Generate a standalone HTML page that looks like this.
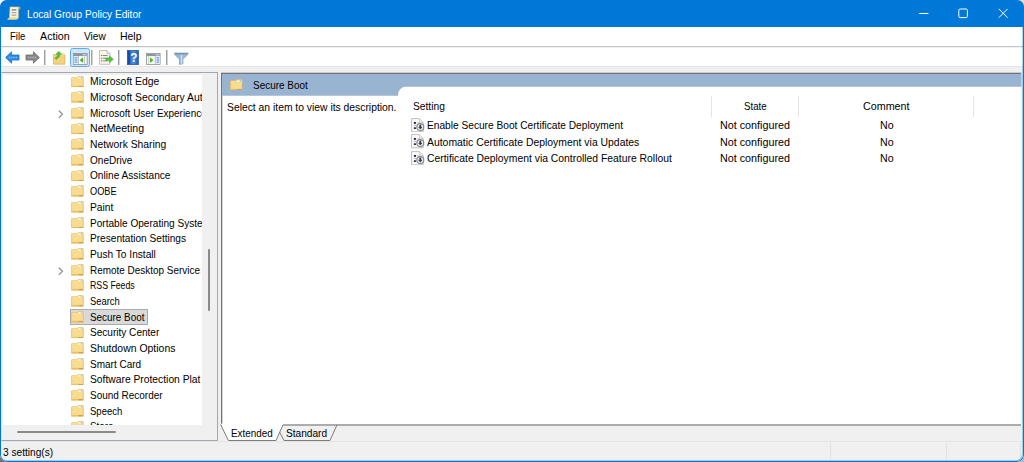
<!DOCTYPE html>
<html lang="en"><head><meta charset="utf-8"><title>Local Group Policy Editor</title>
<style>
html,body{margin:0;padding:0}
body{width:1024px;height:462px;overflow:hidden;position:relative;background:#f0f0f0;
 font-family:"Liberation Sans",sans-serif;font-size:11px;color:#000;line-height:16px}
.abs,.win *{position:absolute;box-sizing:border-box}
.cor{position:absolute;width:10px;height:10px}
.win{position:absolute;left:0;top:0;width:1024px;height:462px;background:#f0f0f0;border-radius:7px;overflow:hidden}
.bd{border:solid #0078d7;border-width:0 1px 1px 1px;left:0;top:0;width:1024px;height:462px;border-radius:7px;pointer-events:none;box-shadow:inset -1px -1px 0 0 rgba(0,120,215,.33)}
.t{white-space:nowrap;transform-origin:0 50%;height:16px;line-height:16px}
.title{left:0;top:0;width:1024px;height:27px;background:#0078d7}
.menu{left:1px;top:27px;width:1022px;height:19px;background:#fff}
.mline{left:1px;top:46px;width:1022px;height:1px;background:#c3c3c3}
.tool{left:1px;top:47px;width:1022px;height:19px;background:linear-gradient(#f0f2f8,#f0f2f8 1px,#fff 1px);box-shadow:0 1px 0 #e5e5e5}
.sep{top:3px;width:1px;height:15px;background:#a0a0a0;box-shadow:1px 0 0 #d2d2d2}
.treep{left:1px;top:72px;width:217px;height:369px;background:#f0f0f0;border:1px solid #a2a6ad;border-left-color:#e3e3e3}
.treec{left:1px;top:2px;width:199px;height:350px;background:#fff;overflow:hidden}
.tr{left:0;height:16px;width:400px}
.tr .fo{left:68.2px;top:2.2px;width:12.8px;height:11.8px}
.tr .ch{left:55.3px;top:5.5px;width:6px;height:8.4px}
.tr .tx{top:0;height:16px;line-height:16px;white-space:nowrap;transform-origin:0 50%}
.selbox{left:67px;top:234px;width:78px;height:16px;background:#d9d9d9;border:1px solid #a9abb0}
.rp{left:221px;top:73px;width:800px;height:353px;background:#fff;border-top:1px solid #747474;border-left:1px solid #747474;border-bottom:2px solid #acacac}
.rph{left:222px;top:74px;width:799px;height:22px;background:#99b4d1}
.vs{top:96px;width:1px;height:21px;background:#e3e3e3}
</style></head>
<body>
<div class="cor" style="left:0;top:0;background:#f3f3f3"></div>
<div class="cor" style="right:0;top:0;background:#ecdcae"></div>
<div class="cor" style="left:0;bottom:0;background:#6e6e6e"></div>
<div class="cor" style="right:0;bottom:0;background:#b9b9b9"></div>
<svg width="0" height="0" style="position:absolute"><defs>
<g id="fold">
 <path d="M0.4 2.3 Q0.4 1.7 1 1.7 L6.2 1.7 L7.3 0.5 L12 0.5 Q12.6 .5 12.6 1.1 L12.6 11.5 L0.4 11.5 Z" fill="#f6d887" stroke="#e6bd62" stroke-width=".7"/>
 <path d="M1 2.5 L6.5 2.5 L7.6 1.3 L12 1.3 L12 3.4 L1 3.4Z" fill="#fbe6a6"/>
 <rect x="1.6" y="4" width="9.8" height="5.6" fill="#f9de95" opacity=".7"/>
 <rect x="8" y="1.3" width="3.6" height="1.1" fill="#fdfdf8"/>
 <rect x="10" y="1.3" width="1.6" height="1.1" fill="#88aee6"/>
 <rect x="0.8" y="10.5" width="11.4" height=".8" fill="#e7b654"/>
 <rect x="8" y="10.6" width="4" height=".7" fill="#b98546"/>
</g>
<g id="pol">
 <path d="M0.6 0.6 H8.4 L12.2 4.4 V13.8 H0.6 Z" fill="#fcfcfc" stroke="#bdbdbd" stroke-width="1"/>
 <path d="M8.4 .6 V4.4 H12.2" fill="#ededed" stroke="#c4c4c4" stroke-width=".8"/>
 <rect x="2.9" y="4" width="2" height="1.9" fill="#262626"/>
 <rect x="2.9" y="9.3" width="2" height="1.7" fill="#262626"/>
 <rect x="2.9" y="7" width="2.6" height=".9" fill="#8fb0de"/>
 <rect x="5.6" y="4.5" width="2.4" height=".9" fill="#aab6c8"/>
 <circle cx="9.3" cy="9.1" r="3.45" fill="#fff" stroke="#8c8c8c" stroke-width="1.25"/>
 <path d="M9.3 6.5 V10" stroke="#3a3f4a" stroke-width="1.9"/>
 <path d="M6.9 8.7 H11.7 L9.3 11.6 Z" fill="#3a3f4a"/>
</g>
</defs></svg>
<div class="win">
 <div class="title">
  <svg style="left:7.4px;top:6.2px;width:14.4px;height:14.4px" viewBox="0 0 14 14">
   <path d="M3 1 L12.5 1 L12.5 3 L11 3 L11 11 Q11 13 9 13 L0.5 13 Q2.5 12.5 2.5 10.5 Z" fill="#fdf3cf" stroke="#e6cf8b" stroke-width=".6"/>
   <path d="M0.5 13 L9 13 Q10.8 12.6 11 11 L3 11 Q2.6 12.6 .5 13Z" fill="#f1d88f"/>
   <path d="M11.2 1 L13.2 1.2 L12.6 3.2 L11.2 3Z" fill="#c98a55"/>
   <rect x="4.5" y="3" width="4.6" height="1.6" fill="#8e96b3"/>
   <rect x="4.5" y="6" width="4.6" height="1" fill="#8e96b3"/>
   <rect x="4.5" y="8.4" width="4.6" height="1" fill="#8e96b3"/>
  </svg>
  <svg style="left:910px;top:0;width:114px;height:27px" viewBox="0 0 114 27">
   <path d="M9.2 13.5 H18.4" stroke="#fff" stroke-width="1" fill="none"/>
   <rect x="48.8" y="9" width="8.6" height="8.6" rx="1.3" fill="none" stroke="#fff" stroke-width="1"/>
   <path d="M88.8 8.9 L97.6 17.7 M97.6 8.9 L88.8 17.7" stroke="#fff" stroke-width="1" fill="none"/>
  </svg>
 </div>
 <div class="menu">
 </div>
 <div class="mline"></div>
 <div class="tool">
  <!-- back -->
  <svg style="left:4px;top:4.4px;width:15px;height:13px" viewBox="0 0 15 13">
   <path d="M0.6 6.5 L6.6 0.8 L6.6 4 L14 4 L14 9 L6.6 9 L6.6 12.2 Z" fill="#2b8be0" stroke="#1b6fc4" stroke-width=".8"/>
   <path d="M4 6.5 H12" stroke="#8cc6f5" stroke-width="1.4" stroke-dasharray="1.2 1"/>
  </svg>
  <!-- forward -->
  <svg style="left:24px;top:4.4px;width:15px;height:13px" viewBox="0 0 15 13">
   <path d="M14.4 6.5 L8.4 0.8 L8.4 4 L1 4 L1 9 L8.4 9 L8.4 12.2 Z" fill="#8b8b8b" stroke="#6a6a6a" stroke-width=".8"/>
   <path d="M3 6.5 H11" stroke="#b5b5b5" stroke-width="1.4" stroke-dasharray="1.2 1"/>
  </svg>
  <div class="sep" style="left:43px"></div>
  <!-- up folder -->
  <svg style="left:52px;top:4px;width:13.4px;height:14px" viewBox="0 0 14 14" preserveAspectRatio="none">
   <path d="M0.5 3.5 L11.5 3.5 L12.5 4.5 L12.5 13.2 L0.5 13.2 Z" fill="#f2d27c" stroke="#d9ae55" stroke-width=".7"/>
   <path d="M8 2 L12 2 L12 4 L8 4Z" fill="#f7e3a4"/>
   <path d="M6 0.3 L9 3.2 L7.2 3.4 L6.6 6 L3.2 8.4 L2 7 L4.6 5 L4.6 3.4 L3 3.2 Z" fill="#4fc437" stroke="#35a524" stroke-width=".4"/>
  </svg>
  <!-- show/hide tree (active) -->
  <div style="left:69px;top:1px;width:20px;height:18.5px;background:#cce8ff;border:1px solid #62acec;border-radius:2.5px"></div>
  <svg style="left:72px;top:6px;width:14.5px;height:12px" viewBox="0 0 15 12">
   <rect x=".4" y=".4" width="14.2" height="11.2" fill="#fff" stroke="#8a8a8a" stroke-width=".8"/>
   <rect x=".8" y=".8" width="13.4" height="2.2" fill="#8d959d"/>
   <rect x="10" y="1.2" width="3.4" height="1" fill="#d6e6f7"/>
   <rect x=".8" y="3" width="4.4" height="8.2" fill="#e7eef7"/>
   <path d="M1.6 4.8 H4.4 M1.6 7 H4.4 M1.6 9.2 H4.4" stroke="#4b84d6" stroke-width="1"/>
   <path d="M5.6 3 V11.4" stroke="#8a8a8a" stroke-width=".6"/>
   <path d="M10.4 4.2 L10.4 10.2 L6.8 7.2 Z" fill="#43b72c"/>
   <path d="M12 3.4 V11.2" stroke="#9a9a9a" stroke-width=".6"/>
  </svg>
  <div class="sep" style="left:89.5px"></div>
  <!-- export list -->
  <svg style="left:98px;top:3px;width:15px;height:15px" viewBox="0 0 15 15">
   <path d="M0.5 0.5 L8 0.5 L11 3.5 L11 14.3 L0.5 14.3 Z" fill="#fbf5e6" stroke="#a9a9a9" stroke-width=".7"/>
   <path d="M8 .5 L8 3.5 L11 3.5" fill="#e8e8e8" stroke="#a9a9a9" stroke-width=".6"/>
   <path d="M3.6 5.5 H8.6 M3.6 8.2 H8.6 M3.6 10.9 H8.6" stroke="#7b8aa0" stroke-width="1"/>
   <path d="M2 5.5 h.9 M2 8.2 h.9 M2 10.9 h.9" stroke="#555" stroke-width="1"/>
   <path d="M6.8 8 L10.4 8 L10.4 5.8 L14.4 9.3 L10.4 12.8 L10.4 10.6 L6.8 10.6 Z" fill="#4fc437" stroke="#35a524" stroke-width=".4"/>
  </svg>
  <div class="sep" style="left:116.5px"></div>
  <!-- help -->
  <svg style="left:126px;top:3px;width:11.8px;height:15px" viewBox="0 0 12.5 15" preserveAspectRatio="none">
   <linearGradient id="hg" x1="0" x2="1" y1="0" y2="0"><stop offset="0" stop-color="#1f55b3"/><stop offset=".55" stop-color="#4b8fe2"/><stop offset="1" stop-color="#1f5bb8"/></linearGradient><rect x=".4" y=".4" width="11.7" height="14.2" fill="url(#hg)" stroke="#2a5aa8" stroke-width=".8"/>
   <rect x=".8" y=".8" width="2.4" height="13.4" fill="#1c4c9f"/>
   <text x="7.4" y="12" font-family="Liberation Sans, sans-serif" font-weight="bold" font-size="12.5" fill="#fff" text-anchor="middle">?</text>
  </svg>
  <!-- action pane -->
  <svg style="left:145px;top:6px;width:14.5px;height:12px" viewBox="0 0 15 12">
   <rect x=".4" y=".4" width="14.2" height="11.2" fill="#fff" stroke="#8a8a8a" stroke-width=".8"/>
   <rect x=".8" y=".8" width="13.4" height="2.2" fill="#8d959d"/>
   <rect x="10" y="1.2" width="3.4" height="1" fill="#d6e6f7"/>
   <rect x="10" y="3" width="4.2" height="8.2" fill="#e7eef7"/>
   <path d="M11 4.8 H13.6 M11 7 H13.6 M11 9.2 H13.6" stroke="#4b84d6" stroke-width="1"/>
   <path d="M9.6 3 V11.4" stroke="#8a8a8a" stroke-width=".6"/>
   <path d="M4.2 4.2 L4.2 10.2 L7.8 7.2 Z" fill="#43b72c"/>
   <path d="M2.8 3.4 V11.2" stroke="#9a9a9a" stroke-width=".6"/>
  </svg>
  <div class="sep" style="left:164.6px"></div>
  <!-- filter -->
  <svg style="left:173px;top:5px;width:14.5px;height:13px" viewBox="0 0 15 13">
   <path d="M0.5 0.8 L14.5 0.8 L14.5 2.2 L9.3 7.4 L9.3 12 L5.7 12.6 L5.7 7.4 L0.5 2.2 Z" fill="#9db9d3" stroke="#6f8fae" stroke-width=".6"/>
   <path d="M1.2 1.2 H13.8 V2 H1.2Z" fill="#5f7f9f"/>
   <path d="M7.8 3 L7.8 12" stroke="#d4e3f1" stroke-width="1.4"/>
  </svg>
 </div>

 <!-- tree pane -->
 <div class="treep">
  <div class="treec">
<div class="selbox"></div>
<div class="tr" style="top:-1.70px"><svg class="fo" viewBox="0 0 13 12"><use href="#fold"/></svg><span class="tx" style="left:87.15px;transform:scaleX(0.9454)">Microsoft Edge</span></div>
<div class="tr" style="top:13.99px"><svg class="fo" viewBox="0 0 13 12"><use href="#fold"/></svg><span class="tx" style="left:87.15px;transform:scaleX(0.9447)">Microsoft Secondary Authentication Factor</span></div>
<div class="tr" style="top:29.68px"><svg class="ch" viewBox="0 0 6 8.4"><path d="M0.9 0.7 L4.5 4.2 L0.9 7.7" fill="none" stroke="#8d9096" stroke-width="1.25"/></svg><svg class="fo" viewBox="0 0 13 12"><use href="#fold"/></svg><span class="tx" style="left:87.15px;transform:scaleX(0.9046)">Microsoft User Experience Virtualization</span></div>
<div class="tr" style="top:45.37px"><svg class="fo" viewBox="0 0 13 12"><use href="#fold"/></svg><span class="tx" style="left:87.15px;transform:scaleX(0.9620)">NetMeeting</span></div>
<div class="tr" style="top:61.06px"><svg class="fo" viewBox="0 0 13 12"><use href="#fold"/></svg><span class="tx" style="left:87.15px;transform:scaleX(0.9372)">Network Sharing</span></div>
<div class="tr" style="top:76.75px"><svg class="fo" viewBox="0 0 13 12"><use href="#fold"/></svg><span class="tx" style="left:87.15px;transform:scaleX(0.9128)">OneDrive</span></div>
<div class="tr" style="top:92.44px"><svg class="fo" viewBox="0 0 13 12"><use href="#fold"/></svg><span class="tx" style="left:87.15px;transform:scaleX(0.9201)">Online Assistance</span></div>
<div class="tr" style="top:108.13px"><svg class="fo" viewBox="0 0 13 12"><use href="#fold"/></svg><span class="tx" style="left:87.15px;transform:scaleX(0.8363)">OOBE</span></div>
<div class="tr" style="top:123.82px"><svg class="fo" viewBox="0 0 13 12"><use href="#fold"/></svg><span class="tx" style="left:87.15px;transform:scaleX(0.9314)">Paint</span></div>
<div class="tr" style="top:139.51px"><svg class="fo" viewBox="0 0 13 12"><use href="#fold"/></svg><span class="tx" style="left:87.15px;transform:scaleX(0.9171)">Portable Operating System</span></div>
<div class="tr" style="top:155.20px"><svg class="fo" viewBox="0 0 13 12"><use href="#fold"/></svg><span class="tx" style="left:87.15px;transform:scaleX(0.9185)">Presentation Settings</span></div>
<div class="tr" style="top:170.89px"><svg class="fo" viewBox="0 0 13 12"><use href="#fold"/></svg><span class="tx" style="left:87.15px;transform:scaleX(0.9227)">Push To Install</span></div>
<div class="tr" style="top:186.58px"><svg class="ch" viewBox="0 0 6 8.4"><path d="M0.9 0.7 L4.5 4.2 L0.9 7.7" fill="none" stroke="#8d9096" stroke-width="1.25"/></svg><svg class="fo" viewBox="0 0 13 12"><use href="#fold"/></svg><span class="tx" style="left:87.15px;transform:scaleX(0.9034);overflow:hidden;width:122.3px">Remote Desktop Services</span></div>
<div class="tr" style="top:202.27px"><svg class="fo" viewBox="0 0 13 12"><use href="#fold"/></svg><span class="tx" style="left:87.15px;transform:scaleX(0.7948)">RSS Feeds</span></div>
<div class="tr" style="top:217.96px"><svg class="fo" viewBox="0 0 13 12"><use href="#fold"/></svg><span class="tx" style="left:87.15px;transform:scaleX(0.8550)">Search</span></div>
<div class="tr sel" style="top:233.65px"><svg class="fo" viewBox="0 0 13 12"><use href="#fold"/></svg><span class="tx" style="left:87.15px;transform:scaleX(0.8994)">Secure Boot</span></div>
<div class="tr" style="top:249.34px"><svg class="fo" viewBox="0 0 13 12"><use href="#fold"/></svg><span class="tx" style="left:87.15px;transform:scaleX(0.9141)">Security Center</span></div>
<div class="tr" style="top:265.03px"><svg class="fo" viewBox="0 0 13 12"><use href="#fold"/></svg><span class="tx" style="left:87.15px;transform:scaleX(0.9503)">Shutdown Options</span></div>
<div class="tr" style="top:280.72px"><svg class="fo" viewBox="0 0 13 12"><use href="#fold"/></svg><span class="tx" style="left:87.15px;transform:scaleX(0.9088)">Smart Card</span></div>
<div class="tr" style="top:296.41px"><svg class="fo" viewBox="0 0 13 12"><use href="#fold"/></svg><span class="tx" style="left:87.15px;transform:scaleX(0.9360);overflow:hidden;width:118.4px">Software Protection Platform</span></div>
<div class="tr" style="top:312.10px"><svg class="fo" viewBox="0 0 13 12"><use href="#fold"/></svg><span class="tx" style="left:87.15px;transform:scaleX(0.9062)">Sound Recorder</span></div>
<div class="tr" style="top:327.79px"><svg class="fo" viewBox="0 0 13 12"><use href="#fold"/></svg><span class="tx" style="left:87.15px;transform:scaleX(0.8685)">Speech</span></div>
<div class="tr" style="top:343.48px"><svg class="fo" viewBox="0 0 13 12"><use href="#fold"/></svg><span class="tx" style="left:87.15px;transform:scaleX(0.8978)">Store</span></div>
  </div>
  <!-- v scroll thumb -->
  <div style="left:206px;top:176px;width:2px;height:62px;background:#8b8989;border-radius:1px"></div>
  <!-- h scroll thumb -->
  <div style="left:15.4px;top:358px;width:98.9px;height:2px;background:#8b8989;border-radius:1px"></div>
 </div>

 <!-- right pane -->
 <div style="left:221px;top:72px;width:801px;height:1px;background:rgba(109,109,109,.28)"></div>
 <div class="rp"></div>
 <div style="left:222px;top:96px;width:1px;height:328px;background:rgba(116,116,116,.3)"></div>
 <svg class="abs" style="left:222px;top:74px;width:800px;height:23px" viewBox="0 0 800 23"><path d="M0 0 H799.5 V12.75 H182.8 C179.6 13.2 176.9 16.3 176.1 19.6 V21.75 H0 Z" fill="#99b4d1"/></svg>
 <svg class="abs" style="left:230.3px;top:78.7px;width:12.4px;height:11.6px" viewBox="0 0 13 12"><use href="#fold"/></svg>

 <div class="vs" style="left:711px"></div>
 <div class="vs" style="left:798px"></div>
 <div class="vs" style="left:973px"></div>

 <svg class="abs" style="left:410.8px;top:117.7px;width:14.4px;height:14.4px" viewBox="0 0 14.4 14.4"><use href="#pol"/></svg>
 <svg class="abs" style="left:410.8px;top:134.3px;width:14.4px;height:14.4px" viewBox="0 0 14.4 14.4"><use href="#pol"/></svg>
 <svg class="abs" style="left:410.8px;top:150.8px;width:14.4px;height:14.4px" viewBox="0 0 14.4 14.4"><use href="#pol"/></svg>
 <!-- tabs -->
 <svg class="abs" style="left:218px;top:422px;width:130px;height:20px" viewBox="0 0 130 20">
  <path d="M2.6 1.8 L65.4 1.8 L58 18.5 L10.4 18.5 Z" fill="#fff"/>
  <path d="M2.6 2.5 L10.4 18.5 L58 18.5 L65 2.8" fill="none" stroke="#7d7d7d" stroke-width="1"/>
  <path d="M61.5 10 L66 18.5 L112 18.5 L119 2.8" fill="none" stroke="#7d7d7d" stroke-width="1"/>
 </svg>

 <!-- status bar -->
 <div style="left:1px;top:441px;width:1021px;height:1px;background:#e4e4e4"></div>
 <div style="left:830px;top:443px;width:1px;height:17px;background:#e2e2e2"></div>
 <div style="left:946px;top:443px;width:1px;height:17px;background:#e2e2e2"></div>
 <div style="left:1020px;top:443px;width:1px;height:17px;background:#e2e2e2"></div>
<div class="t" style="left:26.50px;top:5.55px;transform:scaleX(0.9220);color:#fff">Local Group Policy Editor</div>
<div class="t" style="left:9.80px;top:28.00px;transform:scaleX(0.8633)">File</div>
<div class="t" style="left:39.75px;top:28.00px;transform:scaleX(0.9719)">Action</div>
<div class="t" style="left:83.75px;top:28.00px;transform:scaleX(0.9241)">View</div>
<div class="t" style="left:119.60px;top:28.00px;transform:scaleX(0.9509)">Help</div>
<div class="t" style="left:252.75px;top:76.70px;transform:scaleX(0.9052)">Secure Boot</div>
<div class="t" style="left:226.90px;top:98.60px;transform:scaleX(0.9395)">Select an item to view its description.</div>
<div class="t" style="left:412.50px;top:97.80px;transform:scaleX(0.9288)">Setting</div>
<div class="t" style="left:744.40px;top:97.80px;transform:scaleX(0.8800)">State</div>
<div class="t" style="left:863.25px;top:97.80px;transform:scaleX(0.9764)">Comment</div>
<div class="t" style="left:426.80px;top:116.80px;transform:scaleX(0.9236)">Enable Secure Boot Certificate Deployment</div>
<div class="t" style="left:426.50px;top:133.55px;transform:scaleX(0.9463)">Automatic Certificate Deployment via Updates</div>
<div class="t" style="left:426.80px;top:149.90px;transform:scaleX(0.9423)">Certificate Deployment via Controlled Feature Rollout</div>
<div class="t" style="left:720.20px;top:116.80px;transform:scaleX(0.9772)">Not configured</div>
<div class="t" style="left:720.20px;top:133.55px;transform:scaleX(0.9772)">Not configured</div>
<div class="t" style="left:720.20px;top:149.90px;transform:scaleX(0.9772)">Not configured</div>
<div class="t" style="left:879.75px;top:116.80px;transform:scaleX(0.9682)">No</div>
<div class="t" style="left:879.75px;top:133.55px;transform:scaleX(0.9682)">No</div>
<div class="t" style="left:879.75px;top:149.90px;transform:scaleX(0.9682)">No</div>
<div class="t" style="left:231.00px;top:424.60px;transform:scaleX(0.8951)">Extended</div>
<div class="t" style="left:286.30px;top:424.60px;transform:scaleX(0.9208)">Standard</div>
<div class="t" style="left:3.20px;top:444.20px;transform:scaleX(0.9210)">3 setting(s)</div>
 <div class="bd"></div>
</div>
</body></html>
